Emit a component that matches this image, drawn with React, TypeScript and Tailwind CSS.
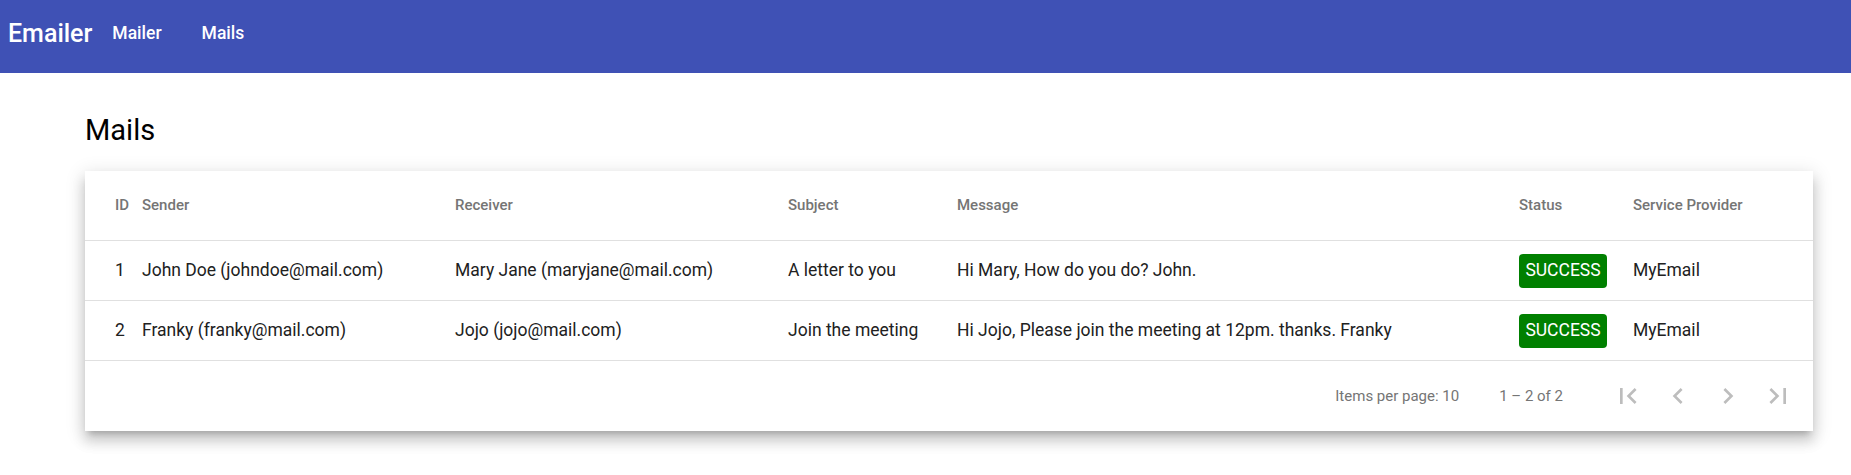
import React from 'react';

type Mail = {
  id: number;
  sender: string;
  receiver: string;
  subject: string;
  message: string;
  status: string;
  provider: string;
};

const mails: Mail[] = [
  {
    id: 1,
    sender: 'John Doe (johndoe@mail.com)',
    receiver: 'Mary Jane (maryjane@mail.com)',
    subject: 'A letter to you',
    message: 'Hi Mary, How do you do? John.',
    status: 'SUCCESS',
    provider: 'MyEmail',
  },
  {
    id: 2,
    sender: 'Franky (franky@mail.com)',
    receiver: 'Jojo (jojo@mail.com)',
    subject: 'Join the meeting',
    message: 'Hi Jojo, Please join the meeting at 12pm. thanks. Franky',
    status: 'SUCCESS',
    provider: 'MyEmail',
  },
];

const cols = 'grid grid-cols-[27px_313px_333px_169px_562px_114px_150px] px-[30px]';

const PageIcon = ({ d }: { d: string }) => (
  <button className="w-[50px] h-[50px] flex items-center justify-center text-[#bdbdbd]">
    <svg viewBox="0 0 24 24" className="w-[32px] h-[32px]" fill="currentColor">
      <path d={d} />
    </svg>
  </button>
);

const App = () => {
  return (
    <div className="min-h-[475px] bg-white font-[Roboto,sans-serif]">
      {/* Toolbar */}
      <nav className="h-[73px] bg-[#3f51b5] text-white flex items-start">
        <span className="ml-[8px] mt-[21px] text-[25px] leading-[25px] font-medium">Emailer</span>
        <button className="px-5 mt-[25px] text-[17.5px] leading-[17.5px] font-medium">Mailer</button>
        <button className="px-5 mt-[25px] text-[17.5px] leading-[17.5px] font-medium">Mails</button>
      </nav>

      <div className="pl-[85px]">
        <h1 className="mt-[43px] text-[29px] leading-[29px] text-black">Mails</h1>

        {/* Table card */}
        <div className="mt-[26px] w-[1728px] bg-white shadow-[0_6px_6px_-4px_rgba(0,0,0,0.2),0_10px_12px_1px_rgba(0,0,0,0.14),0_4px_18px_2px_rgba(0,0,0,0.12)]">
          <div className={`${cols} h-[70px] items-center border-b border-[#e0e0e0] text-[15px] font-medium text-[#757575]`}>
            <div>ID</div>
            <div>Sender</div>
            <div>Receiver</div>
            <div>Subject</div>
            <div>Message</div>
            <div>Status</div>
            <div>Service Provider</div>
          </div>

          {mails.map((m) => (
            <div
              key={m.id}
              className={`${cols} h-[60px] items-center border-b border-[#e0e0e0] text-[17.5px] text-[#212121]`}
            >
              <div>{m.id}</div>
              <div>{m.sender}</div>
              <div>{m.receiver}</div>
              <div>{m.subject}</div>
              <div>{m.message}</div>
              <div>
                <span className="inline-flex items-center justify-center w-[88px] h-[34px] rounded bg-[#008000] text-white text-[17.5px]">
                  {m.status}
                </span>
              </div>
              <div>{m.provider}</div>
            </div>
          ))}

          {/* Paginator */}
          <div className="h-[70px] flex items-center justify-end pr-[10px] text-[15px] text-[#757575]">
            <span>Items per page: 10</span>
            <span className="ml-[40px]">1 – 2 of 2</span>
            <div className="ml-[40px] flex items-center">
              <PageIcon d="M18.41 16.59L13.82 12l4.59-4.59L17 6l-6 6 6 6zM6 6h2v12H6z" />
              <PageIcon d="M15.41 7.41L14 6l-6 6 6 6 1.41-1.41L10.83 12z" />
              <PageIcon d="M10 6L8.59 7.41 13.17 12l-4.58 4.59L10 18l6-6z" />
              <PageIcon d="M5.59 7.41L10.18 12l-4.59 4.59L7 18l6-6-6-6zM16 6h2v12h-2z" />
            </div>
          </div>
        </div>
      </div>
    </div>
  );
};

export default App;
